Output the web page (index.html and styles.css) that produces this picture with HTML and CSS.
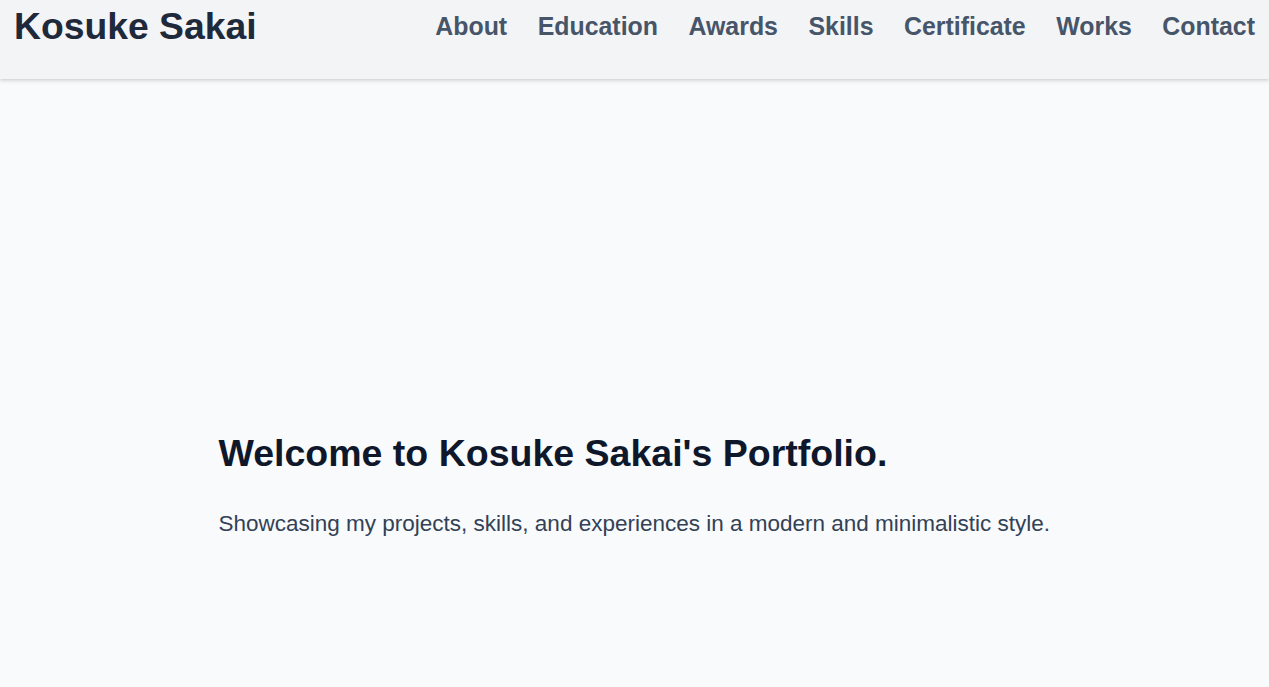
FILE: index.html
```html
<!DOCTYPE html>
<html lang="en">
<head>
<meta charset="utf-8">
<title>Kosuke Sakai</title>
<link rel="stylesheet" href="styles.css">
</head>
<body>
<header class="site-header">
  <div class="brand">Kosuke Sakai</div>
  <nav class="nav">
    <a href="#about">About</a>
    <a href="#education">Education</a>
    <a href="#awards">Awards</a>
    <a href="#skills">Skills</a>
    <a href="#certificate">Certificate</a>
    <a href="#works">Works</a>
    <a href="#contact">Contact</a>
  </nav>
</header>
<main class="hero">
  <div class="hero-inner">
    <h1 class="hero-title">Welcome to Kosuke Sakai's Portfolio.</h1>
    <p class="hero-text">Showcasing my projects, skills, and experiences in a modern and minimalistic style.</p>
  </div>
</main>
</body>
</html>
```
FILE: styles.css
```css
* { box-sizing: border-box; }
html, body { margin: 0; padding: 0; }
body {
  background: #f8fafc;
  font-family: "Liberation Sans", Arial, Helvetica, sans-serif;
  height: 687px;
  overflow: hidden;
}
.site-header {
  height: 79px;
  background: #f3f4f6;
  box-shadow: 0 2px 4px rgba(0,0,0,0.12), 0 1px 2px rgba(0,0,0,0.06);
  display: flex;
  justify-content: space-between;
  align-items: flex-start;
  padding: 0 14px 0 14px;
  position: relative;
  z-index: 1;
}
.brand {
  font-size: 37.3px;
  font-weight: 700;
  color: #1e293b;
  line-height: 52px;
}
.nav {
  display: flex;
  gap: 30.5px;
  padding-top: 9px;
}
.nav a {
  font-size: 24.9px;
  font-weight: 700;
  color: #475569;
  text-decoration: none;
  line-height: 34px;
}
.hero {
  padding-top: 352px;
}
.hero-inner {
  max-width: 896px;
  margin: 0 auto;
  padding: 0 32px;
}
.hero-title {
  margin: 0;
  font-size: 37.5px;
  font-weight: 700;
  color: #0f172a;
  line-height: 44px;
}
.hero-text {
  margin: 34px 0 0;
  font-size: 22.5px;
  color: #334155;
  line-height: 30px;
}
```
